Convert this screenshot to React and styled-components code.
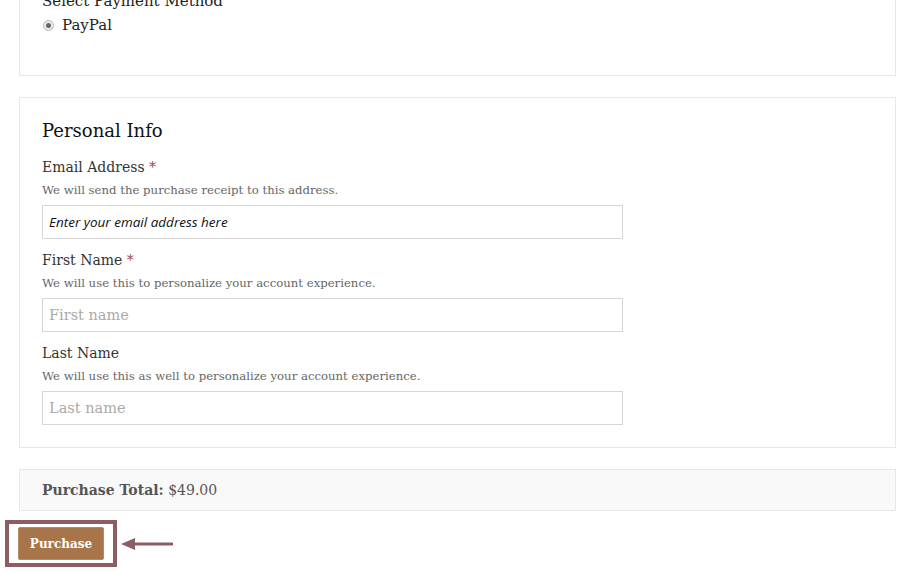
import React from 'react'
import styled, { createGlobalStyle } from 'styled-components'

const GlobalStyle = createGlobalStyle`
  html, body {
    margin: 0;
    padding: 0;
    background: #fff;
    overflow: hidden;
  }
  body {
    font-family: "DejaVu Serif", "Liberation Serif", serif;
    color: #333;
  }
`

const Page = styled.div`
  width: 910px;
  height: 572px;
  overflow: hidden;
  box-sizing: border-box;
  padding: 0 14px 0 19px;
`

const Shift = styled.div`
  margin-top: -15px;
  display: flex;
  flex-direction: column;
`

const Box = styled.div`
  border: 1px solid #e8e8e8;
  background: ${p => (p.muted ? '#f9f9f9' : '#fff')};
  padding: ${p => p.pad || '22px'};
  margin-bottom: ${p => p.gap || '21px'};
`

const SmallHead = styled.div`
  font-size: 15px;
  line-height: 22px;
  color: #222;
`

const RadioRow = styled.label`
  display: flex;
  align-items: center;
  gap: 8px;
  margin-top: 2px;
  font-size: 15px;
  line-height: 22px;
  color: #222;
  padding-left: 1px;
  padding-bottom: 39px;
`

const Radio = styled.span`
  position: relative;
  width: 11px;
  height: 11px;
  border-radius: 50%;
  border: 1px solid #b5b5b5;
  background: #ececec;
  box-sizing: border-box;
  &::after {
    content: '';
    position: absolute;
    left: 2px;
    top: 2px;
    width: 5px;
    height: 5px;
    border-radius: 50%;
    background: #666;
  }
`

const Heading = styled.h2`
  margin: 0 0 14px;
  font-size: 18px;
  font-weight: normal;
  line-height: 24px;
  color: #111;
`

const Field = styled.div`
  display: flex;
  flex-direction: column;
  & + & {
    margin-top: 11px;
  }
`

const Label = styled.div`
  font-size: 14px;
  line-height: 20px;
  color: #333;
`

const Star = styled.span`
  color: #a0474a;
`

const Desc = styled.div`
  margin-top: 3px;
  font-size: 11.7px;
  line-height: 20px;
  color: #666;
`

const Input = styled.input`
  margin-top: 5px;
  width: 581px;
  height: 34px;
  box-sizing: border-box;
  border: 1px solid #d6d6d6;
  padding: 0 6px;
  font-family: ${p => (p.italic ? '"Open Sans", sans-serif' : '"DejaVu Serif", serif')};
  font-style: ${p => (p.italic ? 'italic' : 'normal')};
  font-size: ${p => (p.italic ? '13.5px' : '14.5px')};
  color: #111;
  outline: none;
  &::placeholder {
    color: ${p => (p.italic ? '#111' : '#aaa')};
  }
`

const Total = styled.div`
  font-size: 14px;
  line-height: 40px;
  color: #555;
  b {
    font-weight: 600;
  }
`

const ActionRow = styled.div`
  display: flex;
  align-items: center;
  margin: -12px 0 0 -14px;
`

const Frame = styled.div`
  border: 4px solid #8c5d63;
  padding: 3px 9px;
`

const Button = styled.button`
  background: #a8754a;
  color: #fff;
  border: 1px solid #b88a60;
  border-radius: 2px;
  font-family: "DejaVu Serif", serif;
  font-weight: 600;
  font-size: 12px;
  width: 86px;
  height: 33px;
  cursor: pointer;
`

const Arrow = styled.svg`
  margin-left: 4px;
`

export default function App() {
  return (
    <>
      <GlobalStyle />
      <Page>
        <Shift>
          <Box pad="4px 22px 0" gap="21px">
            <SmallHead>Select Payment Method</SmallHead>
            <RadioRow>
              <Radio />
              PayPal
            </RadioRow>
          </Box>
          <Box pad="21px 22px 22px" gap="21px">
            <Heading>Personal Info</Heading>
            <Field>
              <Label>Email Address <Star>*</Star></Label>
              <Desc>We will send the purchase receipt to this address.</Desc>
              <Input italic placeholder="Enter your email address here" />
            </Field>
            <Field>
              <Label>First Name <Star>*</Star></Label>
              <Desc>We will use this to personalize your account experience.</Desc>
              <Input placeholder="First name" />
            </Field>
            <Field>
              <Label>Last Name</Label>
              <Desc>We will use this as well to personalize your account experience.</Desc>
              <Input placeholder="Last name" />
            </Field>
          </Box>
          <Box muted pad="0 22px" gap="21px">
            <Total><b>Purchase Total:</b> $49.00</Total>
          </Box>
          <ActionRow>
            <Frame>
              <Button>Purchase</Button>
            </Frame>
            <Arrow width="52" height="14" viewBox="0 0 52 14">
              <polygon points="0,7 14,1 14,13" fill="#8c5d63" />
              <rect x="12" y="5.5" width="40" height="3" fill="#8c5d63" />
            </Arrow>
          </ActionRow>
        </Shift>
      </Page>
    </>
  )
}
